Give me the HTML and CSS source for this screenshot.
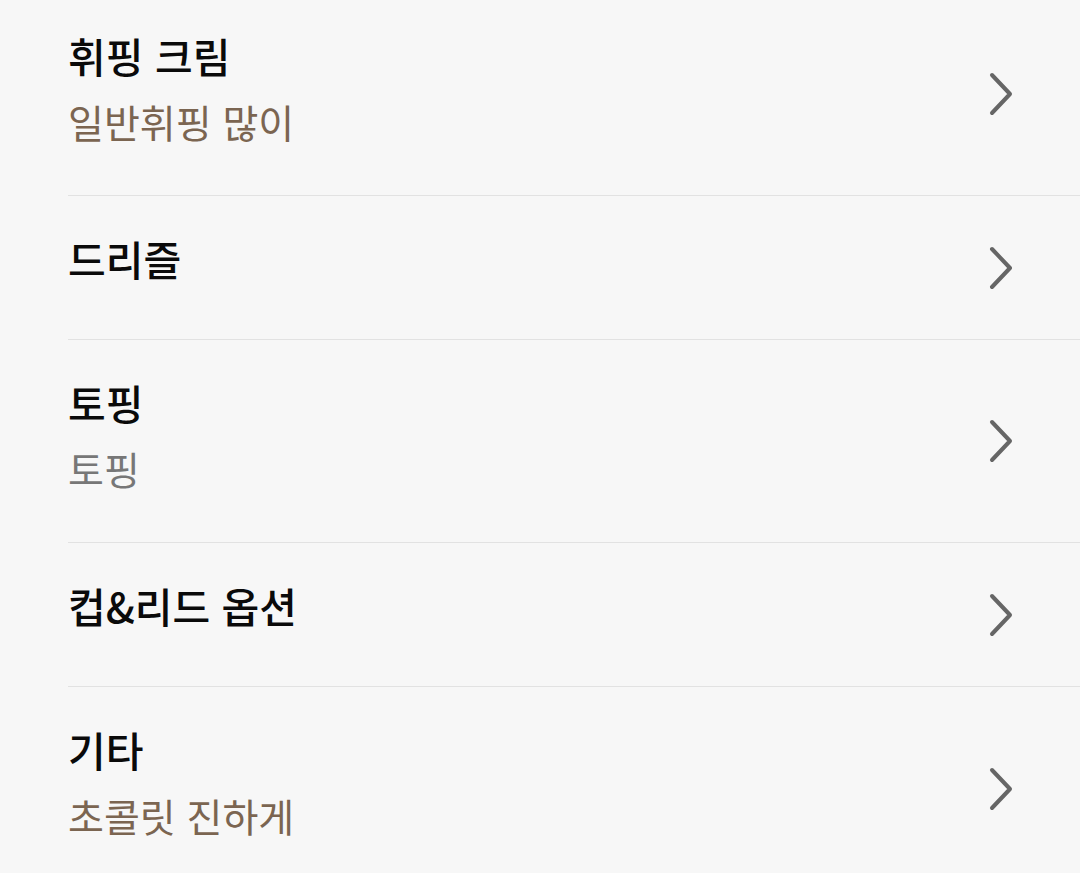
FILE: index.html
```html
<!DOCTYPE html>
<html lang="ko">
<head>
<meta charset="utf-8">
<link rel="stylesheet" href="styles.css">
</head>
<body>
<ul class="list">
  <li class="row two">
    <div class="text"><div class="title">휘핑 크림</div><div class="sub brown">일반휘핑 많이</div></div>
    <svg class="chev" viewBox="0 0 26 46"><polyline points="4,4 22,23 4,42"/></svg>
  </li>
  <li class="row">
    <div class="text"><div class="title">드리즐</div></div>
    <svg class="chev" viewBox="0 0 26 46"><polyline points="4,4 22,23 4,42"/></svg>
  </li>
  <li class="row two">
    <div class="text"><div class="title">토핑</div><div class="sub gray">토핑</div></div>
    <svg class="chev" viewBox="0 0 26 46"><polyline points="4,4 22,23 4,42"/></svg>
  </li>
  <li class="row">
    <div class="text"><div class="title">컵&amp;리드 옵션</div></div>
    <svg class="chev" viewBox="0 0 26 46"><polyline points="4,4 22,23 4,42"/></svg>
  </li>
  <li class="row two">
    <div class="text"><div class="title">기타</div><div class="sub brown">초콜릿 진하게</div></div>
    <svg class="chev" viewBox="0 0 26 46"><polyline points="4,4 22,23 4,42"/></svg>
  </li>
</ul>
</body>
</html>
```
FILE: styles.css
```css
html, body {
  margin: 0;
  padding: 0;
  background: #f7f7f7;
  overflow: hidden;
}
body {
  font-family: "Noto Sans CJK KR", "Noto Sans", sans-serif;
}
.list {
  list-style: none;
  margin: -7px 0 0 68px;
  padding: 0;
}
.row {
  display: flex;
  align-items: flex-start;
  justify-content: space-between;
  height: 144px;
  box-sizing: border-box;
  padding: 35px 66px 0 0;
  border-bottom: 1px solid #e2e2e2;
}
.row.two {
  height: 203px;
}
.row:last-child {
  border-bottom: none;
}
.text {
  display: flex;
  flex-direction: column;
}
.title {
  font-size: 41px;
  line-height: 54px;
  font-weight: 500;
  color: #0a0a0a;
}
.sub {
  font-size: 39px;
  line-height: 54px;
  margin-top: 12px;
}
.brown { color: #7b6551; }
.gray { color: #777777; }
.chev {
  align-self: center;
  margin-top: -35px;
  width: 26px;
  height: 46px;
  fill: none;
  stroke: #666;
  stroke-width: 4;
  stroke-linecap: round;
  stroke-linejoin: round;
}
```
